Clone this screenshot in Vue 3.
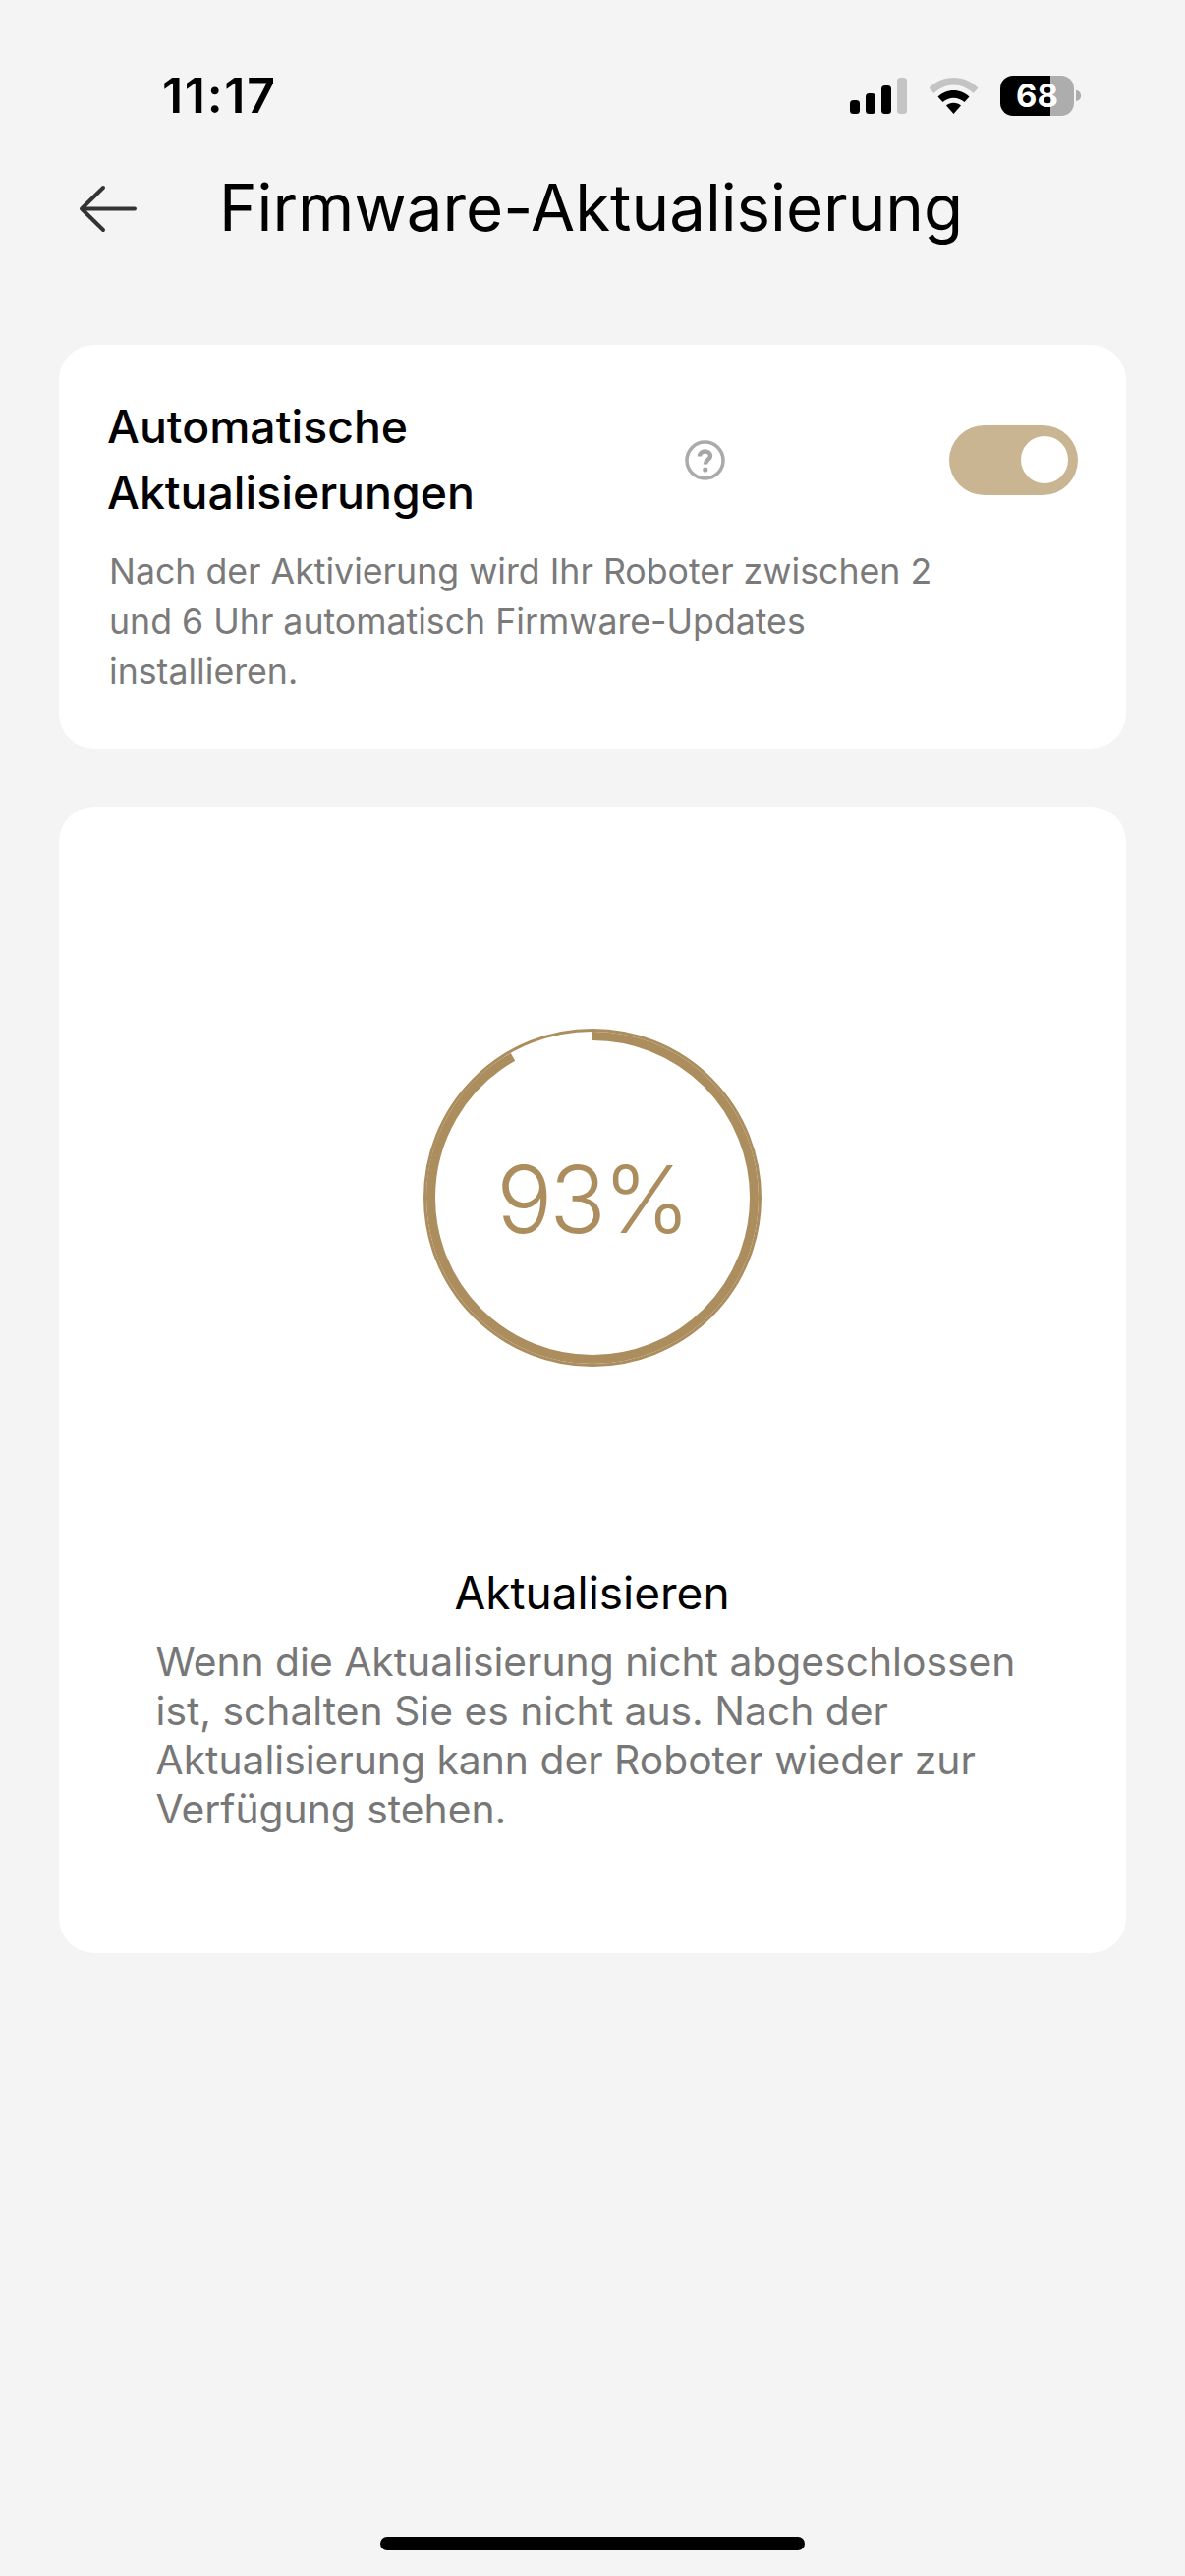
<script setup>
const progress = 330.5
</script>

<template>
  <div class="page">
    <div class="status">
      <span class="time">11:17</span>
      <div class="status-icons">
        <svg class="signal" width="58" height="37" viewBox="0 0 58 37">
          <rect x="0" y="23" width="10" height="14" rx="3.5" fill="#000" />
          <rect x="16" y="16" width="10" height="21" rx="3.5" fill="#000" />
          <rect x="32" y="8" width="10" height="29" rx="3.5" fill="#000" />
          <rect x="48" y="0" width="10" height="37" rx="3.5" fill="#c4c4c4" />
        </svg>
        <svg class="wifi" width="51" height="37" viewBox="0 0 51 37">
          <path d="M0.5 10.5C7 4 16 0 25.5 0S44 4 50.5 10.5L45.5 16C40 10.7 33 7.500 25.500 7.500S11 10.700 5.500 16Z" fill="#c4c4c4" />
          <path d="M9.500 19.500C13.800 15.500 19.500 13 25.500 13S37.200 15.500 41.500 19.500L36.500 25C33.500 22.300 29.600 20.700 25.500 20.700S17.500 22.300 14.500 25Z" fill="#000" />
          <path d="M18 28.500C20 26.700 22.700 25.700 25.500 25.700S31 26.700 33 28.500L25.500 37Z" fill="#000" />
        </svg>
        <div class="battery">
          <div class="battery-body">
            <span class="battery-text">68</span>
          </div>
          <span class="battery-nub"></span>
        </div>
      </div>
    </div>

    <header class="nav">
      <svg class="back" width="60" height="49" viewBox="0 0 60 49">
        <path d="M25 3 L3 24.500 L25 46 M3 24.500 H57" fill="none" stroke="#333" stroke-width="4" stroke-linecap="round" stroke-linejoin="round" />
      </svg>
      <h1 class="title">Firmware-Aktualisierung</h1>
    </header>

    <section class="card auto-card">
      <div class="auto-head">
        <h2 class="auto-title">Automatische Aktualisierungen</h2>
        <svg class="help" width="41" height="41" viewBox="0 0 41 41">
          <circle cx="20.500" cy="20.500" r="18.500" fill="none" stroke="#aaa" stroke-width="3.500" />
          <path d="M15 16.500C15 13.500 17.400 11.500 20.500 11.500S26 13.300 26 16C26 19.500 21 20 21 24.500" fill="none" stroke="#a6a6a6" stroke-width="4.500" />
          <circle cx="20.800" cy="30" r="2.600" fill="#a6a6a6" />
        </svg>
        <div class="toggle"><span class="knob"></span></div>
      </div>
      <p class="auto-text">Nach der Aktivierung wird Ihr Roboter zwischen 2 und 6 Uhr automatisch Firmware-Updates installieren.</p>
    </section>

    <section class="card progress-card">
      <div class="ring">
        <svg width="344" height="344" viewBox="0 0 344 344">
          <circle cx="172" cy="172" r="170.500" fill="none" stroke="#ac8d5d" stroke-width="3" />
          <circle
            cx="172"
            cy="172"
            r="164.500"
            fill="none"
            stroke="#ac8d5d"
            stroke-width="9"
            pathLength="360"
            :stroke-dasharray="`${progress} 360`"
            transform="rotate(-90 172 172)"
          />
        </svg>
        <span class="percent">93%</span>
      </div>
      <h3 class="update-title">Aktualisieren</h3>
      <p class="update-text">Wenn die Aktualisierung nicht abgeschlossen ist, schalten Sie es nicht aus. Nach der Aktualisierung kann der Roboter wieder zur Verfügung stehen.</p>
    </section>

    <div class="home-bar"></div>
  </div>
</template>

<style>
html, body { margin: 0; background: #f4f4f4; }
</style>

<style scoped>
.page {
  width: 1206px;
  height: 2622px;
  box-sizing: border-box;
  padding: 0 60px;
  background: #f4f4f4;
  font-family: Inter, "Liberation Sans", sans-serif;
  color: #000;
  display: flex;
  flex-direction: column;
  overflow: hidden;
}
.status {
  height: 80px;
  margin: 62px 0 0 0;
  padding: 0 0 0 105px;
  display: flex;
  align-items: flex-start;
  justify-content: space-between;
}
.time {
  font-size: 50px;
  font-weight: 600;
  line-height: 60px;
  letter-spacing: 1.700px;
  margin-top: 5px;
}
.status-icons {
  display: flex;
  align-items: flex-start;
  margin-top: 15px;
  margin-right: 46px;
}
.signal { margin-top: 2px; }
.wifi { margin-left: 22px; margin-top: 2px; }
.battery { display: flex; align-items: center; margin-left: 22px; }
.battery-body {
  width: 75px;
  height: 41px;
  border-radius: 13px;
  background: linear-gradient(to right, #000 0 68%, #adadad 68% 100%);
  display: flex;
  align-items: center;
  justify-content: center;
}
.battery-text {
  color: #fff;
  font-size: 33px;
  font-weight: 700;
  line-height: 41px;
}
.battery-nub {
  width: 5px;
  height: 11px;
  margin-left: 2px;
  border-radius: 0 5px 5px 0;
  background: #adadad;
}
.nav {
  display: flex;
  align-items: center;
  height: 80px;
  margin-top: 30px;
}
.back { margin-left: 20px; flex: none; }
.title {
  margin: 0 0 0 83px;
  font-size: 65.4px;
  font-weight: 400;
  line-height: 80px;
  white-space: nowrap;
}
.card {
  background: #fff;
  border-radius: 36px;
  box-sizing: border-box;
}
.auto-card {
  height: 411px;
  margin-top: 99px;
  padding: 50px 49px 0 49px;
}
.auto-head {
  display: flex;
  align-items: center;
}
.auto-title {
  width: 400px;
  margin: 0;
  font-size: 46.4px;
  font-weight: 450;
  line-height: 67px;
}
.help { margin-left: 188px; flex: none; }
.toggle {
  width: 131px;
  height: 71px;
  margin-left: auto;
  border-radius: 36px;
  background: #cab592;
  display: flex;
  align-items: center;
  justify-content: flex-end;
  padding-right: 10px;
  box-sizing: border-box;
  flex: none;
}
.knob {
  width: 48px;
  height: 48px;
  border-radius: 50%;
  background: #fff;
}
.auto-text {
  margin: 21px 0 0 2px;
  width: 860px;
  font-size: 35.7px;
  line-height: 51px;
  color: #7a7a7a;
}
.progress-card {
  height: 1167px;
  margin-top: 59px;
  padding: 226px 100px 0 99px;
  display: flex;
  flex-direction: column;
  align-items: center;
}
.ring {
  position: relative;
  width: 344px;
  height: 344px;
  flex: none;
}
.ring svg { display: block; }
.percent {
  position: absolute;
  inset: 0;
  display: flex;
  align-items: center;
  justify-content: center;
  font-size: 95px;
  font-weight: 300;
  color: #ac8d5d;
  padding-top: 2px;
  letter-spacing: -3px;
}
.update-title {
  margin: 200px 0 0 0;
  font-size: 46px;
  font-weight: 400;
  line-height: 60px;
  text-align: center;
}
.update-text {
  margin: 15px 0 0 -1px;
  width: 100%;
  font-size: 40.8px;
  line-height: 50px;
  color: #777;
}
.home-bar {
  width: 432px;
  height: 14px;
  margin: auto auto 26px;
  border-radius: 7px;
  background: #000;
  flex: none;
}
</style>
